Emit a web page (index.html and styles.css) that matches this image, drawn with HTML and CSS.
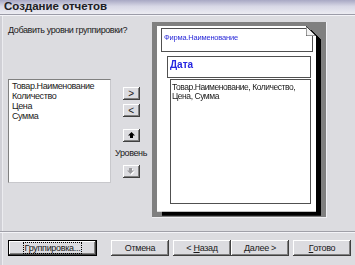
FILE: index.html
```html
<!DOCTYPE html>
<html>
<head>
	<title>Создание отчетов</title>
	<link rel="stylesheet" href="styles.css">
</head>
<body>
	<div class="window">
		<div class="titlebar">Создание отчетов</div>

		<div class="content">
			<div class="left">
				<p class="prompt">Добавить уровни группировки?</p>
				<div class="pick">
					<div class="listbox">
						<div>Товар.Наименование</div>
						<div>Количество</div>
						<div>Цена</div>
						<div>Сумма</div>
					</div>
					<div class="arrows">
						<button class="btn small">&gt;</button>
						<button class="btn small">&lt;</button>
						<button class="btn small up">
							<svg width="7" height="6" viewBox="0 0 7 6"><polygon points="3.5,0 7,3.5 5,3.5 5,6 2,6 2,3.5 0,3.5" fill="#000"/></svg>
						</button>
						<span class="level">Уровень</span>
						<button class="btn small down">
							<svg width="8" height="7" viewBox="0 0 8 7"><polygon points="4.5,7 8,3.5 6,3.5 6,1 3,1 3,3.5 1,3.5" fill="#fff"/><polygon points="3.5,6 7,2.5 5,2.5 5,0 2,0 2,2.5 0,2.5" fill="#9a9a9e"/></svg>
						</button>
					</div>
				</div>
			</div>

			<div class="preview">
				<div class="sheet">
					<div class="page">
						<div class="band firm">Фирма.Наименование</div>
						<div class="band date">Дата</div>
						<div class="band detail">Товар.Наименование, Количество, Цена, Сумма</div>
					</div>
					<svg class="fold" width="10" height="10" viewBox="0 0 10 10"><polygon points="0,0 10,10 0,10" fill="#f2f2f2" stroke="#404040" stroke-width="1"/></svg>
				</div>
			</div>
		</div>

		<div class="footer">
			<button class="btn wide default"><span class="focus">Группировка...</span></button>
			<button class="btn">Отмена</button>
			<div class="pair">
				<button class="btn">&lt;&nbsp;<u>Н</u>азад</button>
				<button class="btn"><u>Д</u>алее&nbsp;&gt;</button>
			</div>
			<button class="btn"><u>Г</u>отово</button>
		</div>
	</div>
</body>
</html>
```

FILE: styles.css
```css
/* classic wizard dialog */
body {
	margin: 0;
	font-family: 'Liberation Sans', Arial, sans-serif;
	font-size: 9px;
	letter-spacing: -0.4px;
	color: #1a1a1a;
	background: #dcdce0;
}

.window {
	width: 355px;
	height: 265px;
	display: flex;
	flex-direction: column;
	background: #dcdce0;
	box-shadow: inset 2px 0 #d0d0d6, inset 3px 0 #ececf0;
	overflow: hidden;
}

.titlebar {
	height: 14px;
	padding-left: 4px;
	font-size: 11.5px;
	font-weight: bold;
	letter-spacing: 0;
	line-height: 13px;
	color: #202024;
	background: linear-gradient(180deg, #a8a8c4 0%, #d8d8e6 45%, #ececf2 100%);
	border-bottom: 1px solid #9c9ca8;
	box-shadow: 0 1px 0 #f4f4f8;
}

.content {
	display: flex;
	height: 212px;
	padding: 7px 0 0 8px;
}

.left {
	width: 144px;
}

.prompt {
	margin: 0;
	padding-top: 3px;
	line-height: 11px;
}

.pick {
	display: flex;
	margin-top: 43px;
}

.listbox {
	width: 98px;
	height: 101px;
	padding: 1px 0 0 3px;
	background: #fff;
	border: 1px solid #808080;
	border-right-color: #c8c8cc;
	border-bottom-color: #c8c8cc;
	line-height: 10px;
}

.arrows {
	display: flex;
	flex-direction: column;
	align-items: center;
	width: 30px;
	margin-left: 5px;
	padding-top: 8px;
}

.btn {
	font-family: inherit;
	font-size: 9px;
	letter-spacing: -0.3px;
	color: #1a1a1a;
	background: #dcdce0;
	border: 0;
	padding: 0;
	box-shadow: inset -1px -1px #404040, inset 1px 1px #fff, inset -2px -2px #808080;
	display: flex;
	align-items: center;
	justify-content: center;
}

.btn.small {
	width: 17px;
	height: 13px;
	font-size: 10px;
	margin-bottom: 4px;
}

.btn.up {
	margin-top: 8px;
}

.level {
	margin: 2px 0 6px;
	line-height: 11px;
}

.preview {
	width: 175px;
	height: 196px;
	box-sizing: border-box;
	padding: 4px 0 0 5px;
	background: #808080;
	border-right: 1px solid #f0f0f4;
	border-bottom: 1px solid #f0f0f4;
}

.sheet {
	position: relative;
	width: 159px;
	height: 186px;
	filter: drop-shadow(5px 4px 0 #000);
}

.page {
	height: 100%;
	box-sizing: border-box;
	padding: 2px 3px 8px 4px;
	background: #fff;
	display: flex;
	flex-direction: column;
	clip-path: polygon(0 0, 149px 0, 159px 10px, 159px 100%, 0 100%);
}

.fold {
	position: absolute;
	top: 0;
	right: 0;
}

.band {
	border: 1px solid #505050;
}

.firm {
	height: 24px;
	padding: 4px 2px;
	font-size: 7.5px;
	letter-spacing: -0.2px;
	color: #2a2ad8;
	box-sizing: border-box;
}

.date {
	height: 22px;
	box-sizing: border-box;
	margin: 4px 2px 0 6px;
	padding: 2px 2px;
	font-size: 10px;
	font-weight: bold;
	letter-spacing: 0;
	color: #2626e0;
}

.detail {
	flex: 1;
	margin: 1px 2px 0 9px;
	padding: 3px 1px;
	font-size: 8.5px;
	letter-spacing: -0.45px;
	line-height: 9px;
}

.footer {
	display: flex;
	align-items: center;
	height: 34px;
	padding-left: 8px;
	border-top: 1px solid #a0a0a8;
	box-shadow: inset 0 1px #f4f4f8;
}

.footer .btn {
	width: 58px;
	height: 16px;
}

.footer .btn.wide {
	width: 89px;
	margin-right: 14px;
	box-shadow: inset 0 0 0 1px #000, inset -2px -2px #404040, inset 2px 2px #fff, inset -3px -3px #808080;
}

.focus {
	padding: 0 1px;
	outline: 1px dotted #000;
}

.pair {
	display: flex;
	margin: 0 4px;
}
```
